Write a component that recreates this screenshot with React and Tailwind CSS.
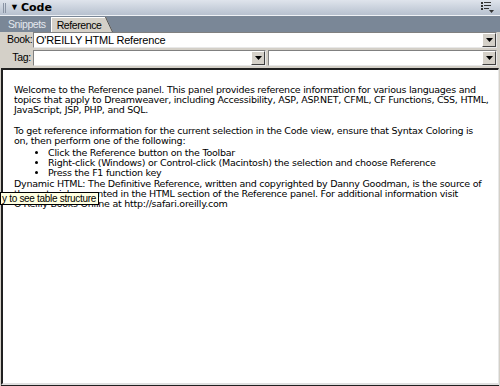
import React from "react";

function DropBtn() {
  return (
    <div className="w-[14px] h-[14px] bg-[#d4d0c8] border border-t-white border-l-white border-r-[#404040] border-b-[#404040] flex items-center justify-center shrink-0">
      <svg width="7" height="4" viewBox="0 0 7 4"><path d="M0 0h7L3.5 4z" fill="#000" /></svg>
    </div>
  );
}

function Select({ value, className }) {
  return (
    <div className={"h-[16px] bg-white border border-t-[#808080] border-l-[#808080] border-r-[#e8e8e8] border-b-[#e8e8e8] flex items-center pl-[2px] " + className}>
      <span className="flex-1 text-[11px] tracking-[-0.2px] text-black whitespace-nowrap leading-none">{value}</span>
      <DropBtn />
    </div>
  );
}

export default function App() {
  const verd = { fontFamily: '"DejaVu Sans", Verdana, sans-serif' };
  return (
    <div className="w-[500px] h-[386px] bg-[#d4d0c8] flex flex-col overflow-hidden relative" style={{ fontFamily: '"Liberation Sans", Tahoma, sans-serif' }}>
      {/* title bar */}
      <div className="h-[16px] bg-gradient-to-b from-[#dfe4ec] to-[#b7c1cf] border-b border-[#eef1f5] flex items-center pl-[3px] pr-[6px]">
        <div className="flex gap-[1px] mr-[4px]">
          <div className="w-[1px] h-[10px] bg-[#8a94a4]" />
          <div className="w-[1px] h-[10px] bg-[#8a94a4]" />
        </div>
        <span className="text-[9px] text-black mr-[2px]">▼</span>
        <span className="text-[11px] font-bold text-black leading-none" style={verd}>Code</span>
        <div className="flex-1" />
        <svg width="13" height="11" viewBox="0 0 13 11">
          <rect x="0" y="0" width="2" height="2" fill="#333" />
          <rect x="3" y="0" width="7" height="1" fill="#333" />
          <rect x="0" y="3" width="2" height="2" fill="#333" />
          <rect x="3" y="3" width="7" height="1" fill="#333" />
          <rect x="0" y="6" width="2" height="2" fill="#333" />
          <rect x="3" y="6" width="5" height="1" fill="#333" />
          <path d="M8 8h5l-2.5 3z" fill="#333" />
        </svg>
      </div>
      {/* tabs */}
      <div className="h-[16px] bg-[#7a8797] flex items-end pl-[5px]">
        <div className="h-[15px] px-[3px] text-[10.5px] tracking-[-0.4px] text-[#e4e8ee] flex items-center leading-none">Snippets</div>
        <div className="relative h-[15px] ml-[2px] flex items-center">
          <div className="h-[15px] bg-[#d4d0c8] border-t border-l border-white pl-[5px] pr-[3px] text-[10.5px] tracking-[-0.4px] text-black flex items-center leading-none">Reference</div>
          <svg width="8" height="15" viewBox="0 0 8 15" className="block">
            <path d="M0 0h1l7 15H0z" fill="#d4d0c8" />
            <path d="M0.5 0L7.5 15" stroke="#505050" strokeWidth="1" />
          </svg>
        </div>
      </div>
      {/* book row */}
      <div className="flex items-center h-[16px] pl-[7px] pr-[3px]">
        <span className="text-[10.5px] tracking-[-0.3px] text-black w-[26px] whitespace-nowrap">Book:</span>
        <Select value="O'REILLY HTML Reference" className="flex-1" />
      </div>
      {/* tag row */}
      <div className="flex items-center h-[16px] mt-[2px] pl-[7px] pr-[3px] gap-[2px]">
        <span className="text-[10.5px] tracking-[-0.3px] text-black w-[24px] text-right whitespace-nowrap">Tag:</span>
        <Select value="" className="w-[233px]" />
        <Select value="" className="flex-1" />
      </div>
      {/* content */}
      <div className="flex-1 mt-[2px] mx-[1px] mb-[1px] bg-white border-t-2 border-l-2 border-[#202020] border-r border-r-[#e8e8e8] border-b-2 border-b-[#e0e0e0] shadow-[0_1px_0_#202020] pt-[15px] pl-[11px] pr-[4px] text-[9.5px] tracking-[-0.25px] leading-[10px] text-black whitespace-nowrap" style={verd}>
        <p>
          Welcome to the Reference panel. This panel provides reference information for various languages and<br />
          topics that apply to Dreamweaver, including Accessibility, ASP, ASP.NET, CFML, CF Functions, CSS, HTML,<br />
          JavaScript, JSP, PHP, and SQL.
        </p>
        <p className="mt-[11px]">
          To get reference information for the current selection in the Code view, ensure that Syntax Coloring is<br />
          on, then perform one of the following:
        </p>
        <ul className="list-disc pl-[34px] mt-[2px]">
          <li>Click the Reference button on the Toolbar</li>
          <li>Right-click (Windows) or Control-click (Macintosh) the selection and choose Reference</li>
          <li>Press the F1 function key</li>
        </ul>
        <p className="mt-[1px]">
          Dynamic HTML: The Definitive Reference, written and copyrighted by Danny Goodman, is the source of<br />
          the material presented in the HTML section of the Reference panel. For additional information visit<br />
          O'Reilly Books Online at http://safari.oreilly.com
        </p>
      </div>
      {/* tooltip */}
      <div className="absolute left-0 top-[192px] h-[13px] pl-[1px] pr-[2px] bg-[#ffffe1] border border-black text-[10px] tracking-[-0.3px] text-black leading-[11px] whitespace-nowrap">y to see table structure</div>
    </div>
  );
}
